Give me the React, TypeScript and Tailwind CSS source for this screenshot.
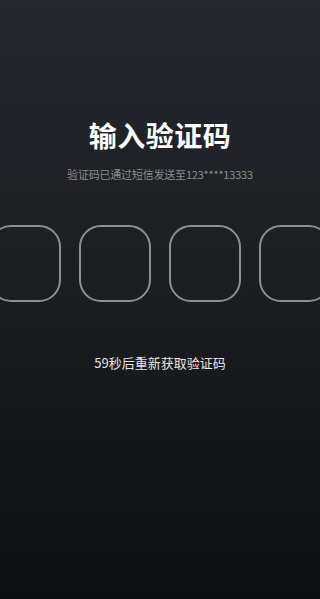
import React from "react";

export default function App() {
  const font = { fontFamily: '"Noto Sans CJK SC", "Noto Sans", sans-serif' };
  return (
    <div
      className="relative w-[320px] h-[599px] overflow-hidden bg-gradient-to-b from-[#25282d] via-[#1b1d21] to-[#0e0f11] flex flex-col items-center"
      style={font}
    >
      <svg className="absolute left-[-12px] top-[28px]" width="14" height="22" viewBox="0 0 14 22">
        <path d="M12 2 L3 11 L12 20" stroke="#45484e" strokeWidth="1.5" fill="none" />
      </svg>
      <h1 className="mt-[116px] text-[28px] leading-[38px] font-semibold text-white tracking-[0.5px]">
        输入验证码
      </h1>
      <p className="mt-[12px] text-[11px] leading-[16px] text-[#8c8d90] tracking-[-0.2px]">
        验证码已通过短信发送至123****13333
      </p>
      <div className="mt-[43px] flex gap-[18px] justify-center w-[320px]">
        {[0, 1, 2, 3].map((i) => (
          <div
            key={i}
            className="shrink-0 w-[72px] h-[77px] rounded-[22px] border-2 border-[#8e8f92]"
          />
        ))}
      </div>
      <p className="mt-[52px] text-[13px] leading-[18px] text-[#e6e6e6]">59秒后重新获取验证码</p>
    </div>
  );
}
